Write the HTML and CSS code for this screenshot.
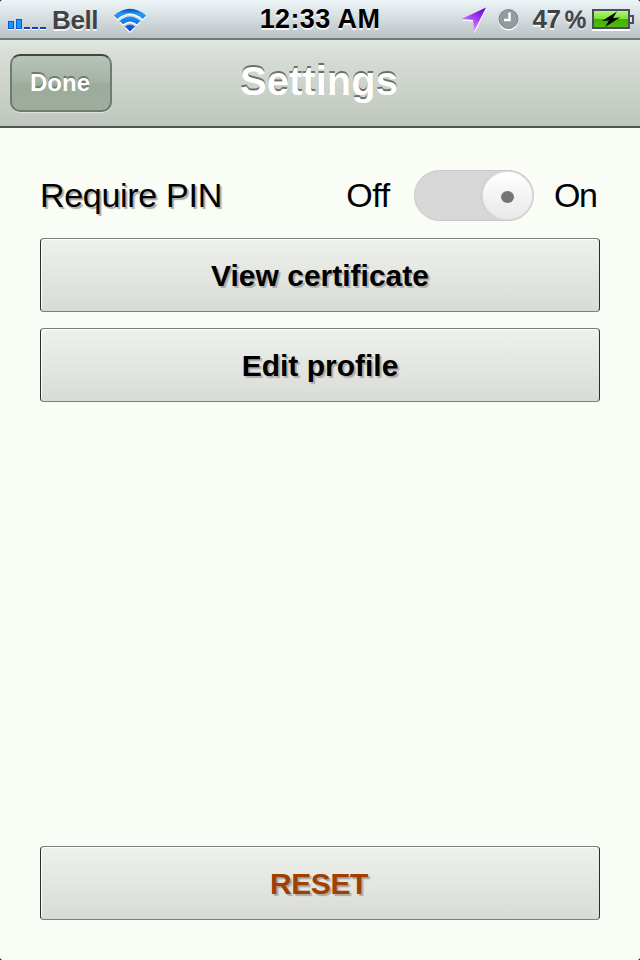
FILE: index.html
```html
<!DOCTYPE html>
<html lang="en">
<head>
<meta charset="utf-8">
<title>Settings</title>
<link rel="stylesheet" href="styles.css">
</head>
<body>
<div class="status-bar">
  <div class="status-left">
    <svg class="signal" width="40" height="14" viewBox="0 0 40 14">
      <path d="M0 13.5h6M8 13.5h6M16 13.5h6M24 13.5h6M32 13.5h6" stroke="#fff" />
      <rect x=".5" y="5.5" width="5" height="7" fill="#1899ff" stroke="#0b57cf" />
      <rect x="8.500" y="3.500" width="5" height="9" fill="#1899ff" stroke="#0b57cf" />
      <path d="M16 12h6M24 12h6M32 12h6" stroke="#0b43cc" stroke-width="2" />
    </svg>
    <span class="carrier">Bell</span>
    <svg class="wifi" width="32" height="26" viewBox="0 0 32 26">
      <defs>
        <linearGradient id="wifi-fill" x1="0" y1="0" x2="0" y2="24" gradientUnits="userSpaceOnUse">
          <stop offset="0" stop-color="#0838b0" />
          <stop offset=".25" stop-color="#219cf5" />
          <stop offset=".6" stop-color="#1279eb" />
          <stop offset="1" stop-color="#0738c8" />
        </linearGradient>
      </defs>
      <g fill="#fff" transform="translate(0 1.500)">
        <path d="M0 7.500Q16-6 32 7.500L28.800 11Q16 0 3.200 11Z" />
        <path d="M5.700 13Q16 4 26.300 13L23 16.300Q16 10.500 9 16.300Z" />
        <path d="M11 18.500Q16 14.500 21 18.500L16 23.500Z" />
      </g>
      <g fill="url(#wifi-fill)">
        <path d="M0 7.500Q16-6 32 7.500L28.800 11Q16 0 3.200 11Z" />
        <path d="M5.700 13Q16 4 26.300 13L23 16.300Q16 10.500 9 16.300Z" />
        <path d="M11 18.500Q16 14.500 21 18.500L16 23.500Z" />
      </g>
    </svg>
  </div>
  <div class="clock">12:33 AM</div>
  <div class="status-right">
    <svg class="location" width="26" height="27" viewBox="0 0 26 27">
      <defs>
        <linearGradient id="location-fill" x1="1" y1="0" x2=".4" y2="1">
          <stop offset="0" stop-color="#5d00ba" />
          <stop offset=".5" stop-color="#a13cf3" />
          <stop offset="1" stop-color="#d39aff" />
        </linearGradient>
      </defs>
      <path d="M25 2L13.500 26.500L12 14.500L1 13.500Z" fill="#fff" />
      <path d="M25 .5L13 24.500L12 13L.5 12Z" fill="url(#location-fill)" />
    </svg>
    <svg class="alarm" width="21" height="22" viewBox="0 0 21 22">
      <circle cx="10.500" cy="11.500" r="10" fill="#fff" />
      <circle cx="10.500" cy="10" r="9.500" fill="#929b9d" stroke="#7c8587" />
      <path d="M11.500 3.500V11H6" fill="none" stroke="#fff" stroke-width="2.500" />
    </svg>
    <span class="percent">47</span><span class="percent-sign">%</span>
    <svg class="battery" width="43" height="22" viewBox="0 0 43 22">
      <defs>
        <linearGradient id="charge" x1="0" y1="0" x2="0" y2="1">
          <stop offset="0" stop-color="#b4f47a" />
          <stop offset=".48" stop-color="#7be42f" />
          <stop offset=".5" stop-color="#3db000" />
          <stop offset="1" stop-color="#4fbd0d" />
        </linearGradient>
      </defs>
      <path d="M0 21H38" stroke="#fff" stroke-width="2" />
      <rect x="1" y="1" width="36" height="18" fill="#fff" stroke="#4a4c62" stroke-width="2" />
      <rect x="2" y="2" width="34" height="16" fill="url(#charge)" />
      <path d="M38 7H41V14H38" fill="#dfe3e8" stroke="#4a4c62" stroke-width="2" />
      <path d="M25 2.500L10 12L17 11.500L13 18L28 8.500L21 9Z" fill="#000" />
    </svg>
  </div>
</div>

<div class="header">
  <button class="done">Done</button>
  <h1 class="title">Settings</h1>
</div>

<div class="content">
  <div class="pin-row">
    <span class="pin-label">Require PIN</span>
    <span class="off-label">Off</span>
    <span class="toggle"><span class="knob"></span></span>
    <span class="on-label">On</span>
  </div>
  <button class="btn">View certificate</button>
  <button class="btn">Edit profile</button>
  <button class="btn reset">RESET</button>
</div>

<!-- rounded screen corners -->
<i class="corner top-left"></i>
<i class="corner top-right"></i>
<i class="corner bottom-left"></i>
<i class="corner bottom-right"></i>
</body>
</html>
```
FILE: styles.css
```css
* {
  box-sizing: border-box;
  margin: 0;
  padding: 0;
}

body {
  display: flex;
  flex-direction: column;
  height: 960px;
  overflow: hidden;
  background: #f9fdf6;
  font-family: "Liberation Sans", Arial, sans-serif;
  color: #000;
}

button {
  font-family: inherit;
  font-weight: bold;
}

svg {
  display: block;
  flex: none;
}

.status-bar {
  display: grid;
  grid-template-columns: 1fr auto 1fr;
  height: 40px;
  background: linear-gradient(#eef5f9, #d5dce0 50%, #bbc2c6);
  border-bottom: 2px solid #717978;
  font-weight: bold;
  text-shadow: 0 2px 0 rgba(255, 255, 255, 0.8);
}

.status-left,
.status-right {
  display: flex;
  align-items: flex-start;
}

.status-left {
  padding-left: 8px;
}

.status-right {
  justify-content: flex-end;
  padding-right: 5px;
}

.signal {
  margin-top: 16px;
}

.carrier {
  margin-left: 4px;
  font-size: 26px;
  letter-spacing: -0.4px;
  line-height: 40px;
  color: #404244;
}

.wifi {
  margin: 8px 0 0 16px;
}

.clock {
  font-size: 27px;
  letter-spacing: 0.4px;
  line-height: 39px;
}

.location {
  margin-top: 7px;
}

.alarm {
  margin: 9px 0 0 11px;
}

.percent {
  margin-left: 14px;
  font-size: 26px;
  letter-spacing: -0.4px;
  line-height: 39px;
  color: #404244;
}

.percent-sign {
  margin-left: 4px;
  font-size: 24px;
  font-weight: normal;
  line-height: 39px;
  color: #404244;
  -webkit-text-stroke: 0.8px #404244;
}

.battery {
  margin: 9px 0 0 6px;
}

.header {
  display: grid;
  grid-template-columns: 102px 1fr 102px;
  height: 88px;
  padding: 14px 10px 0;
  background: linear-gradient(#e3e8e2, #d8ded7 15%, #bec6bd);
  border-bottom: 2px solid #50564f;
}

.done {
  height: 58px;
  padding-right: 2px;
  border: 2px solid #6f7b70;
  border-top-color: #3f4540;
  border-radius: 10px;
  background: linear-gradient(#b9c4b9, #a4b1a3 50%, #9cab9b 50%, #9eac9d);
  box-shadow: 0 1px 1px rgba(255, 255, 255, 0.5);
  color: #fff;
  font-size: 24px;
  text-shadow: 0 -2px 0 #707970;
}

.title {
  padding-right: 2px;
  color: #fff;
  font-size: 40px;
  line-height: 55px;
  text-align: center;
  text-shadow: 0 -2px 0 #6b706b;
}

.content {
  display: flex;
  flex: 1;
  flex-direction: column;
  gap: 16px;
  padding: 42px 40px 40px;
}

.pin-row {
  display: flex;
  align-items: flex-start;
  height: 52px;
  font-size: 34px;
  line-height: 50px;
}

.pin-label {
  flex: 1;
  letter-spacing: -0.3px;
  text-shadow: 2px 2px 1px #aaa;
}

.toggle {
  display: flex;
  justify-content: flex-end;
  width: 120px;
  height: 51px;
  margin: 0 20px 0 24px;
  border: 1px solid #c8c8c8;
  border-radius: 26px;
  background: #d7d7d7;
}

.knob {
  display: grid;
  place-items: center;
  width: 51px;
  height: 49px;
  border: 1px solid #dedede;
  border-radius: 50%;
  background: linear-gradient(#fff, #e9e9e9);
  box-shadow: -1px 0 1px #ccc;
}

.knob::after {
  content: "";
  width: 13px;
  height: 12px;
  margin-top: 2px;
  border-radius: 50%;
  background: #747474;
}

.off-label {
  letter-spacing: -0.3px;
}

.on-label {
  width: 46px;
  letter-spacing: -1.5px;
}

.btn {
  height: 74px;
  padding-top: 2px;
  border: 1px solid #7b7e7a;
  border-right-color: #2b2d2b;
  border-left-color: #2b2d2b;
  border-radius: 4px;
  background: linear-gradient(#eff1ed, #d9dbd6);
  box-shadow: inset 1px 1px 1px #fff;
  font-size: 30px;
  color: #000;
  text-shadow: 2px 2px 1px #aaa;
}

.reset {
  margin-top: auto;
  padding-right: 2px;
  color: #a04000;
  letter-spacing: -0.4px;
}

.corner {
  position: absolute;
  width: 4px;
  height: 4px;
}

.top-left {
  top: 0;
  left: 0;
  background: radial-gradient(circle at 100% 100%, transparent 4px, #333 5px);
}

.top-right {
  top: 0;
  right: 0;
  background: radial-gradient(circle at 0 100%, transparent 4px, #333 5px);
}

.bottom-left {
  top: 956px;
  left: 0;
  background: radial-gradient(circle at 100% 0, transparent 4px, #111 5px);
}

.bottom-right {
  top: 956px;
  right: 0;
  background: radial-gradient(circle at 0 0, transparent 4px, #111 5px);
}
```
